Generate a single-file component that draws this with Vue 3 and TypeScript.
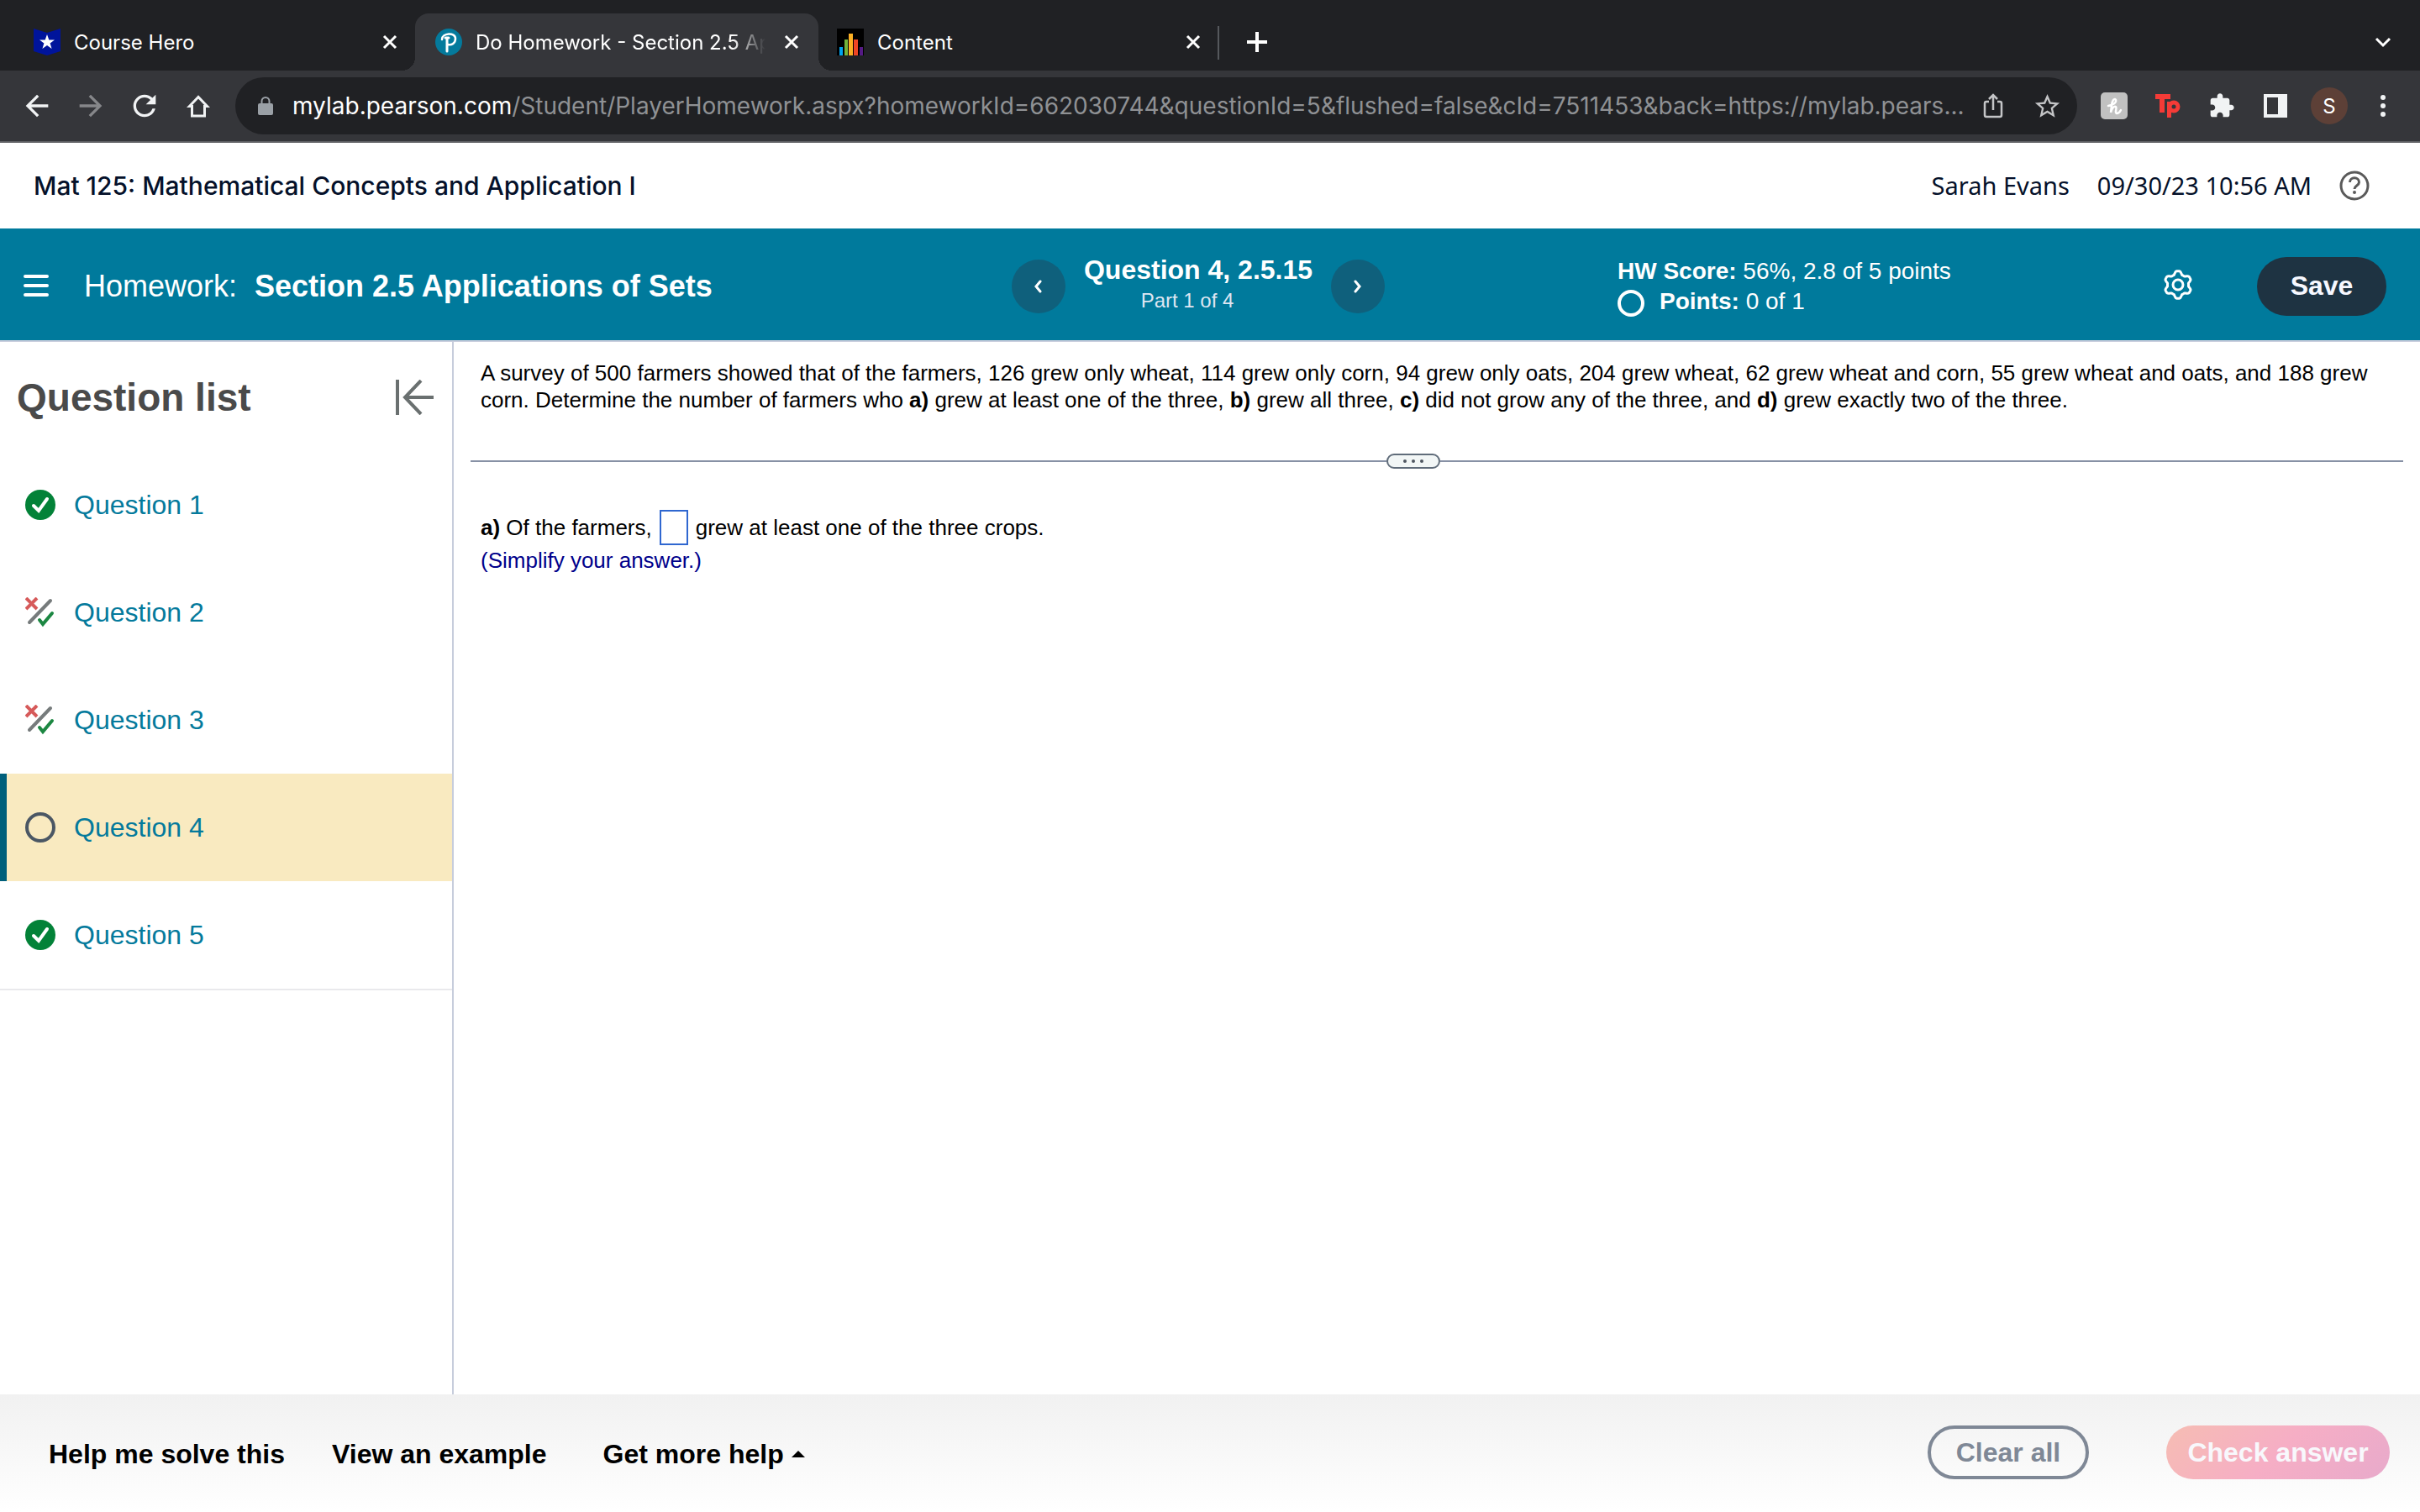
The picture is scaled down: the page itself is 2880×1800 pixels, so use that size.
<script setup lang="ts">
import { ref } from 'vue'

type Status = 'correct' | 'partial' | 'open'

interface Question {
  id: number
  label: string
  status: Status
}

const questions: Question[] = [
  { id: 1, label: 'Question 1', status: 'correct' },
  { id: 2, label: 'Question 2', status: 'partial' },
  { id: 3, label: 'Question 3', status: 'partial' },
  { id: 4, label: 'Question 4', status: 'open' },
  { id: 5, label: 'Question 5', status: 'correct' },
]

const current = ref(4)
const answer = ref('')

/* Six-toothed outline for the settings button, centred in a 36px box. */
function gearPath(): string {
  const points: string[] = []
  for (let i = 0; i < 120; i++) {
    const angle = (i / 120) * Math.PI * 2
    const wave = Math.max(-1, Math.min(1, Math.cos(6 * (angle - Math.PI / 2)) * -1.5))
    const radius = 14.4 - wave * 1.9
    const x = 18 + radius * Math.cos(angle)
    const y = 18 + radius * Math.sin(angle)
    points.push(`${x.toFixed(1)} ${y.toFixed(1)}`)
  }
  return `M${points.join('L')}Z`
}
const gear = gearPath()
</script>

<template>
  <div class="page">
    <nav class="tabs" aria-label="Tabs">
      <div class="tab first">
        <svg class="favicon" viewBox="0 0 32 32">
          <path d="M0 0l16 5L32 0v27l-16 5L0 27z" fill="#00149b" />
          <path d="M16 7l2.300 6.400h6.700l-5.400 4 2 6.600-5.600-4-5.600 4 2-6.600-5.400-4h6.700z" fill="#fff" />
        </svg>
        <span class="tab-title">Course Hero</span>
        <button class="icon-btn" aria-label="Close Course Hero">
          <svg width="18" height="18" viewBox="0 0 18 18"><path d="M2 2l14 14M16 2L2 16" stroke="#fff" stroke-width="3" /></svg>
        </button>
      </div>
      <div class="tab active">
        <svg class="favicon" viewBox="0 0 32 32">
          <circle cx="16" cy="16" r="16" fill="#047a9c" />
          <path d="M8 13c0-8 16-9 16-1 0 6-5 8-9 7" fill="none" stroke="#fff" stroke-width="2.500" stroke-linecap="round" />
          <path d="M14 12v15" fill="none" stroke="#fff" stroke-width="3" stroke-linecap="round" />
          <path d="M12 11h4" fill="none" stroke="#fff" stroke-width="3" stroke-linecap="round" />
        </svg>
        <span class="tab-title fade">Do Homework - Section 2.5 Applications</span>
        <button class="icon-btn" aria-label="Close Do Homework">
          <svg width="18" height="18" viewBox="0 0 18 18"><path d="M2 2l14 14M16 2L2 16" stroke="#fff" stroke-width="3" /></svg>
        </button>
      </div>
      <div class="tab third">
        <svg class="favicon" viewBox="0 0 32 32">
          <path d="M0 0h32v32H0z" fill="#000" />
          <path d="M3 22h4v10H3z" fill="#00a4f0" />
          <path d="M9 13h4v19H9z" fill="#72b33a" />
          <path d="M14 6h5v26h-5z" fill="#fbb024" />
          <path d="M20 13h5v19h-5z" fill="#ee4523" />
          <path d="M27 22h4v10h-4z" fill="#551a85" />
        </svg>
        <span class="tab-title">Content</span>
        <button class="icon-btn" aria-label="Close Content">
          <svg width="18" height="18" viewBox="0 0 18 18"><path d="M2 2l14 14M16 2L2 16" stroke="#fff" stroke-width="3" /></svg>
        </button>
      </div>
      <button class="icon-btn new-tab" aria-label="New tab">
        <svg width="24" height="24" viewBox="0 0 24 24"><path d="M12 0v24M0 12h24" stroke="#fff" stroke-width="4" /></svg>
      </button>
      <button class="icon-btn tab-search" aria-label="Search tabs">
        <svg width="20" height="14" viewBox="0 0 20 14"><path d="M2 3l8 8 8-8" fill="none" stroke="#fff" stroke-width="3" /></svg>
      </button>
    </nav>

    <div class="toolbar">
      <div class="nav-buttons">
        <button class="icon-btn" aria-label="Back">
          <svg width="40" height="40" viewBox="0 0 24 24"><path fill="#f1f3f4" d="M20 11H7.830l5.590-5.590L12 4l-8 8 8 8 1.410-1.410L7.830 13H20v-2z" /></svg>
        </button>
        <button class="icon-btn" aria-label="Forward">
          <svg width="40" height="40" viewBox="0 0 24 24"><path fill="#86878a" d="M4 13h12.170l-5.590 5.590L12 20l8-8-8-8-1.410 1.410L16.170 11H4v2z" /></svg>
        </button>
        <button class="icon-btn" aria-label="Reload">
          <svg width="40" height="40" viewBox="0 0 24 24"><path fill="#f1f3f4" d="M17.650 6.350A7.958 7.958 0 0 0 12 4c-4.420 0-7.990 3.580-7.990 8s3.570 8 7.990 8c3.730 0 6.840-2.550 7.730-6h-2.080A5.990 5.990 0 0 1 12 18c-3.310 0-6-2.690-6-6s2.690-6 6-6c1.660 0 3.140.690 4.220 1.780L13 11h7V4l-2.350 2.350z" /></svg>
        </button>
        <button class="icon-btn" aria-label="Home">
          <svg width="40" height="40" viewBox="0 0 40 40"><path fill="none" stroke="#f1f3f4" stroke-width="3" d="M20 9.500L9.500 20.500h3v11.500h15V20.500h3z" /></svg>
        </button>
      </div>
      <div class="omnibox">
        <svg width="18" height="24" viewBox="0 0 18 24">
          <path d="M2 9h14a2 2 0 0 1 2 2v10a2 2 0 0 1-2 2H2a2 2 0 0 1-2-2V11a2 2 0 0 1 2-2z" fill="#9aa0a6" />
          <path d="M4.500 10V6.500a4.500 4.500 0 0 1 9 0V10" fill="none" stroke="#9aa0a6" stroke-width="2" />
        </svg>
        <span class="url"><span class="host">mylab.pearson.com</span>/Student/PlayerHomework.aspx?homeworkId=662030744&amp;questionId=5&amp;flushed=false&amp;cId=7511453&amp;back=https://mylab.pears...</span>
        <button class="icon-btn" aria-label="Share">
          <svg width="24" height="32" viewBox="0 0 24 32"><path d="M7 11H4a2 2 0 0 0-2 2v14a2 2 0 0 0 2 2h16a2 2 0 0 0 2-2V13a2 2 0 0 0-2-2h-3M12 21V4M7 8l5-5 5 5" fill="none" stroke="#c4c5c7" stroke-width="2.500" /></svg>
        </button>
        <button class="icon-btn" aria-label="Bookmark">
          <svg width="35" height="35" viewBox="0 0 24 24"><path fill="#c4c5c7" d="M22 9.240l-7.190-.620L12 2 9.190 8.630 2 9.240l5.460 4.730L5.820 21 12 17.270 18.180 21l-1.630-7.030L22 9.240zM12 15.400l-3.760 2.270 1-4.280-3.320-2.880 4.380-.380L12 6.100l1.710 4.040 4.380.380-3.320 2.880 1 4.280L12 15.400z" /></svg>
        </button>
      </div>
      <div class="extensions">
        <button class="icon-btn" aria-label="Honey">
          <svg width="32" height="32" viewBox="0 0 32 32">
            <rect width="32" height="32" rx="5" fill="#c1c1c1" />
            <path d="M9 16c6-1 10-4 9-7-2-3-5 2-5 7l-1 8c1-5 4-8 6-7 2 2-2 7 1 8 2 0 4-2 5-4" fill="none" stroke="#fff" stroke-width="2.500" stroke-linecap="round" />
          </svg>
        </button>
        <button class="icon-btn" aria-label="Text to speech">
          <svg width="32" height="32" viewBox="0 0 32 32">
            <path d="M1 2h18v6H1zM6 2h6v22H6z" fill="#f43b37" />
            <circle cx="23" cy="17" r="5" fill="none" stroke="#f43b37" stroke-width="5" />
            <path d="M15 11h5v19h-5z" fill="#f43b37" />
          </svg>
        </button>
        <button class="icon-btn" aria-label="Extensions">
          <svg width="32" height="32" viewBox="0 0 24 24"><path fill="#f1f3f4" d="M20.500 11H19V7c0-1.100-.900-2-2-2h-4V3.500C13 2.120 11.880 1 10.500 1S8 2.120 8 3.500V5H4c-1.100 0-1.990.900-1.990 2v3.800H3.500c1.490 0 2.700 1.210 2.700 2.700s-1.210 2.700-2.700 2.700H2V20c0 1.100.900 2 2 2h3.800v-1.500c0-1.490 1.210-2.700 2.700-2.700 1.490 0 2.700 1.210 2.700 2.700V22H17c1.100 0 2-.900 2-2v-4h1.500c1.380 0 2.500-1.120 2.500-2.500S21.880 11 20.500 11z" /></svg>
        </button>
        <button class="icon-btn" aria-label="Side panel">
          <svg width="32" height="32" viewBox="0 0 32 32"><path fill="#f1f3f4" fill-rule="evenodd" d="M2 2h28v28H2zM6 6v20h13V6z" /></svg>
        </button>
        <button class="avatar" aria-label="Profile">S</button>
        <button class="icon-btn" aria-label="Menu">
          <svg width="8" height="28" viewBox="0 0 8 28" fill="#f1f3f4"><circle cx="4" cy="4" r="3" /><circle cx="4" cy="14" r="3" /><circle cx="4" cy="24" r="3" /></svg>
        </button>
      </div>
    </div>

    <header class="course">
      <h1>Mat 125: Mathematical Concepts and Application I</h1>
      <div class="account">
        <span>Sarah Evans</span>
        <span>09/30/23 10:56 AM</span>
        <button class="icon-btn" aria-label="Help">
          <svg width="36" height="36" viewBox="0 0 36 36" fill="none" stroke="#5a5a5a" stroke-width="3">
            <circle cx="18" cy="18" r="16" />
            <path d="M12.500 14c0-7 11-7 11 0 0 4-5.500 4-5.500 8" />
            <circle cx="18" cy="26" r="1" stroke-width="2" />
          </svg>
        </button>
      </div>
    </header>

    <section class="bar">
      <div class="assignment">
        <button class="icon-btn" aria-label="Open menu">
          <svg width="30" height="28" viewBox="0 0 30 28"><path d="M2 2h26M2 13h26M2 24h26" stroke="#fff" stroke-width="4" stroke-linecap="round" /></svg>
        </button>
        <h2><span>Homework:</span> <strong>Section 2.5 Applications of Sets</strong></h2>
      </div>
      <div class="stepper">
        <button class="round" aria-label="Previous question">
          <svg width="10" height="16" viewBox="0 0 10 16"><path d="M7 2L2 8l5 6" fill="none" stroke="#fff" stroke-width="3" stroke-linecap="round" /></svg>
        </button>
        <div class="step-text">
          <strong>Question 4, 2.5.15</strong>
          <span>Part 1 of 4</span>
        </div>
        <button class="round" aria-label="Next question">
          <svg width="10" height="16" viewBox="0 0 10 16"><path d="M2 2l5 6-5 6" fill="none" stroke="#fff" stroke-width="3" stroke-linecap="round" /></svg>
        </button>
      </div>
      <div class="status">
        <div class="score">
          <p><strong>HW Score:</strong> 56%, 2.8 of 5 points</p>
          <p class="points">
            <svg width="32" height="36" viewBox="0 0 32 36"><circle cx="16" cy="20" r="14" fill="none" stroke="#fff" stroke-width="4" /></svg>
            <span><strong>Points:</strong> 0 of 1</span>
          </p>
        </div>
        <button class="icon-btn settings" aria-label="Settings">
          <svg width="36" height="36" viewBox="0 0 36 36" fill="none" stroke="#fff" stroke-width="3" stroke-linejoin="round">
            <path :d="gear" />
            <circle cx="18" cy="18" r="6" />
          </svg>
        </button>
        <button class="save">Save</button>
      </div>
    </section>

    <div class="body">
      <aside class="sidebar">
        <div class="sidebar-head">
          <h2>Question list</h2>
          <button class="icon-btn" aria-label="Collapse question list">
            <svg width="46" height="42" viewBox="0 0 46 42" fill="none" stroke="#6a7070" stroke-width="4"><path d="M3 0v42" /><path d="M46 21H12M31 1L12 21l19 20" /></svg>
          </button>
        </div>
        <ul>
          <li v-for="q in questions" :key="q.id" :class="{ selected: q.id === current }">
            <a href="#" @click.prevent="current = q.id">
              <svg v-if="q.status === 'correct'" width="36" height="36" viewBox="0 0 36 36">
                <circle cx="18" cy="18" r="18" fill="#038238" />
                <path d="M10 19l6 6 10-14" fill="none" stroke="#fff" stroke-width="4" stroke-linecap="round" />
              </svg>
              <svg v-else-if="q.status === 'partial'" width="36" height="36" viewBox="0 0 36 36" fill="none" stroke-width="4">
                <path d="M1 1l13 13M14 1L1 14" stroke="#d65a5a" />
                <path d="M5 30L30 4" stroke="#767b7c" stroke-linecap="round" />
                <path d="M17 27l4 5 11-13" stroke="#1c8742" stroke-linecap="round" />
              </svg>
              <svg v-else width="36" height="36" viewBox="0 0 36 36">
                <circle cx="18" cy="18" r="16" fill="none" stroke="#4b5764" stroke-width="4" />
              </svg>
              <span>{{ q.label }}</span>
            </a>
          </li>
        </ul>
      </aside>

      <main class="content">
        <p class="prompt">
          A survey of 500 farmers showed that of the farmers, 126 grew only wheat, 114 grew only corn, 94 grew only oats, 204 grew wheat, 62 grew wheat and corn, 55 grew wheat and oats, and 188 grew corn. Determine the number of farmers who <b>a)</b> grew at least one of the three, <b>b)</b> grew all three, <b>c)</b> did not grow any of the three, and <b>d)</b> grew exactly two of the three.
        </p>
        <div class="divider">
          <span class="rule"></span>
          <button class="grip" aria-label="Resize question">
            <svg width="26" height="6" viewBox="0 0 26 6" fill="#4f5660"><circle cx="3" cy="3" r="2" /><circle cx="13" cy="3" r="2" /><circle cx="23" cy="3" r="2" /></svg>
          </button>
          <span class="rule wide"></span>
        </div>
        <div class="answer">
          <label for="answer-a"><b>a)</b> Of the farmers,</label>
          <input id="answer-a" v-model="answer" type="text" autocomplete="off" />
          <span>grew at least one of the three crops.</span>
        </div>
        <p class="hint">(Simplify your answer.)</p>
      </main>
    </div>

    <footer class="footer">
      <button class="link">Help me solve this</button>
      <button class="link">View an example</button>
      <button class="link more">
        Get more help
        <svg width="16" height="8" viewBox="0 0 16 8"><path d="M0 8l8-8 8 8z" fill="#000" /></svg>
      </button>
      <button class="clear">Clear all</button>
      <button class="check">Check answer</button>
    </footer>
  </div>
</template>

<style>
body {
  margin: 0;
  background: #fff;
}
</style>

<style scoped>
* {
  box-sizing: border-box;
}
.page {
  display: flex;
  flex-direction: column;
  min-height: 100vh;
  font-family: "Liberation Sans", Arial, sans-serif;
  color: #000;
}
h1,
h2,
p,
ul {
  margin: 0;
  padding: 0;
}
button {
  font-family: inherit;
  border: 0;
  padding: 0;
  background: none;
  cursor: pointer;
}
svg {
  display: block;
  flex: none;
}
.icon-btn {
  display: flex;
  align-items: center;
  justify-content: center;
  flex: none;
}

/* Browser tabs */
.tabs {
  display: flex;
  align-items: flex-end;
  height: 84px;
  background: #202124;
  font-family: Inter, "Open Sans", sans-serif;
}
.tab {
  position: relative;
  display: flex;
  align-items: center;
  gap: 16px;
  flex: 0 1 480px;
  min-width: 0;
  height: 68px;
  padding: 0 23px 0 24px;
  color: #fff;
  font-size: 24px;
}
.tab.first {
  flex-basis: 494px;
  padding: 0 21px 0 40px;
}
.tab.third {
  flex-basis: 477px;
  padding: 0 22px;
}
.tab.third::after {
  content: "";
  position: absolute;
  right: 0;
  top: 15px;
  width: 2px;
  height: 40px;
  background: #55585c;
}
.tab.active {
  background: #35363a;
  border-radius: 16px 16px 0 0;
}
.tab.active::before,
.tab.active::after {
  content: "";
  position: absolute;
  bottom: 0;
  width: 16px;
  height: 16px;
}
.tab.active::before {
  left: -16px;
  background: radial-gradient(circle at 0 0, transparent 16px, #35363a 16px);
}
.tab.active::after {
  right: -16px;
  background: radial-gradient(circle at 100% 0, transparent 16px, #35363a 16px);
}
.favicon {
  width: 32px;
  height: 32px;
}
.tab-title {
  flex: 1;
  min-width: 0;
  overflow: hidden;
  white-space: nowrap;
}
.fade {
  margin-right: 6px;
  -webkit-mask-image: linear-gradient(to right, #000 calc(100% - 40px), transparent);
  mask-image: linear-gradient(to right, #000 calc(100% - 40px), transparent);
}
.new-tab {
  height: 68px;
  margin-left: 33px;
}
.tab-search {
  height: 68px;
  margin: 0 34px 0 auto;
}

/* Address row */
.toolbar {
  display: flex;
  align-items: center;
  height: 86px;
  padding: 0 40px 0 24px;
  background: #35363a;
  border-bottom: 2px solid #5f6064;
  font-family: Inter, "Open Sans", sans-serif;
}
.nav-buttons {
  display: flex;
  gap: 24px;
  margin-right: 24px;
}
.omnibox {
  display: flex;
  align-items: center;
  flex: 1;
  min-width: 0;
  height: 68px;
  padding: 0 18px 0 27px;
  border-radius: 34px;
  background: #202124;
}
.url {
  flex: 1;
  min-width: 0;
  margin: 0 16px 0 23px;
  overflow: hidden;
  white-space: nowrap;
  font-size: 28px;
  color: #8f9194;
}
.host {
  color: #fff;
}
.omnibox .icon-btn + .icon-btn {
  margin-left: 35px;
}
.extensions {
  display: flex;
  align-items: center;
  gap: 32px;
  margin-left: 28px;
}
.avatar {
  width: 44px;
  height: 44px;
  margin: 0 6px 0 -6px;
  border-radius: 50%;
  background: #5d4037;
  color: #fff;
  font-size: 24px;
}

/* Course heading */
.course {
  display: flex;
  align-items: center;
  justify-content: space-between;
  height: 102px;
  padding: 0 60px 0 40px;
  color: #05112a;
}
.course h1 {
  font: 500 30px/40px Inter, sans-serif;
}
.account {
  display: flex;
  align-items: center;
  gap: 33px;
  font: 400 29px/40px "Noto Sans", "Open Sans", sans-serif;
}

/* Assignment bar */
.bar {
  display: flex;
  align-items: center;
  height: 135px;
  padding: 4px 40px 0 28px;
  background: #007a9c;
  border-bottom: 2px solid #c7cddc;
  color: #fff;
}
.assignment {
  display: flex;
  align-items: center;
  gap: 42px;
  flex: 1;
  min-width: 0;
}
.assignment h2 {
  display: flex;
  gap: 21px;
  font-size: 36px;
  line-height: 44px;
  font-weight: 400;
  white-space: nowrap;
}
.stepper {
  display: flex;
  align-items: center;
  gap: 20px;
}
.round {
  display: flex;
  align-items: center;
  justify-content: center;
  width: 64px;
  height: 64px;
  border-radius: 50%;
  background: #0f607c;
}
.step-text {
  display: flex;
  flex-direction: column;
  align-items: center;
  width: 276px;
  padding-bottom: 4px;
  font-size: 32px;
  line-height: 38px;
  white-space: nowrap;
}
.step-text span {
  padding-right: 26px;
  font-size: 24px;
  line-height: 36px;
  color: #dfe6f2;
}
.status {
  display: flex;
  align-items: center;
  width: 915px;
  margin-left: 277px;
}
.score {
  flex: 1;
  font-size: 28px;
  line-height: 36px;
}
.points {
  display: flex;
  align-items: center;
  gap: 18px;
}
.settings {
  margin: 0 76px 4px 0;
}
.save {
  width: 154px;
  height: 70px;
  border-radius: 35px;
  background: #1e3342;
  color: #f6f8ff;
  font-size: 32px;
  font-weight: 700;
}

/* Question list */
.body {
  display: flex;
  flex: 1;
}
.sidebar {
  flex: none;
  width: 540px;
  border-right: 2px solid #c7cddc;
}
.sidebar-head {
  display: flex;
  align-items: center;
  justify-content: space-between;
  height: 130px;
  padding: 2px 22px 0 20px;
}
.sidebar-head h2 {
  font-size: 46px;
  line-height: 56px;
  color: #4a4a4a;
}
.sidebar ul {
  list-style: none;
  border-bottom: 2px solid #e9e9ec;
}
.sidebar a {
  display: flex;
  align-items: center;
  gap: 22px;
  height: 128px;
  padding-left: 30px;
  font-size: 32px;
  color: #047a9c;
  text-decoration: none;
}
.sidebar .selected a {
  padding-left: 22px;
  border-left: 8px solid #005f7b;
  background: #f9eac0;
}

/* Exercise */
.content {
  flex: 1;
  min-width: 0;
  padding: 21px 20px 0;
  font-size: 26px;
  line-height: 32px;
}
.prompt {
  padding: 0 12px;
}
.divider {
  display: flex;
  align-items: center;
  margin-top: 48px;
}
.rule {
  flex: 1 1 0;
  height: 2px;
  background: #8791a5;
}
.rule.wide {
  flex-basis: 56px;
}
.grip {
  display: flex;
  align-items: center;
  justify-content: center;
  width: 64px;
  height: 18px;
  border: 2px solid #606c7a;
  border-radius: 9px;
  background: #f2f6f6;
}
.answer {
  display: flex;
  align-items: center;
  margin-top: 49px;
  padding: 0 12px;
}
.answer input {
  width: 34px;
  height: 42px;
  margin: 0 9px;
  padding: 0 2px;
  border: 2px solid #2f67d0;
  font: inherit;
  outline: none;
}
.hint {
  margin-top: 2px;
  padding: 0 12px;
  color: #00008b;
}

/* Footer */
.footer {
  display: flex;
  align-items: flex-start;
  height: 140px;
  padding: 37px 36px 0 58px;
  background: linear-gradient(#f1f1f1, #fff);
}
.footer button {
  height: 64px;
  font-size: 32px;
  font-weight: 700;
  line-height: 64px;
  white-space: nowrap;
}
.footer .link {
  height: 68px;
  line-height: 68px;
}
.link + .link {
  margin-left: 56px;
}
.footer .more {
  display: flex;
  align-items: center;
  gap: 9px;
  margin-left: 67px;
}
.footer .clear {
  width: 192px;
  margin-left: auto;
  border: 4px solid #7f8896;
  border-radius: 32px;
  line-height: 56px;
  color: #7f8896;
}
.footer .check {
  width: 266px;
  margin-left: 92px;
  border-radius: 32px;
  background: linear-gradient(135deg, #f6bdb3, #f6aec5 50%, #e8aacb);
  color: #f8f8fc;
}
</style>
